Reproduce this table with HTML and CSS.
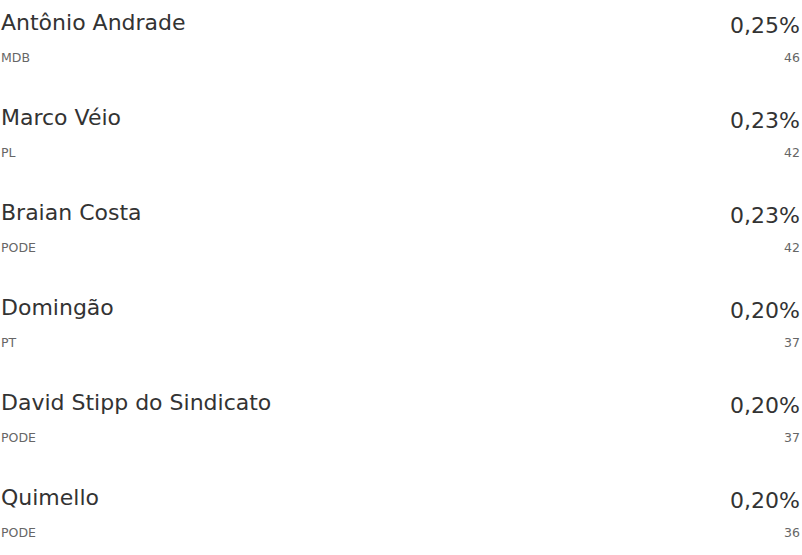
FILE: index.html
```
<!DOCTYPE html>
<html lang="pt-BR">
<head>
<meta charset="utf-8">
<link rel="stylesheet" href="styles.css">
</head>
<body>
<ul class="list">
  <li class="row">
    <div class="left"><div class="name">Antônio Andrade</div><div class="party">MDB</div></div>
    <div class="right"><div class="pct">0,25%</div><div class="votes">46</div></div>
  </li>
  <li class="row">
    <div class="left"><div class="name">Marco Véio</div><div class="party">PL</div></div>
    <div class="right"><div class="pct">0,23%</div><div class="votes">42</div></div>
  </li>
  <li class="row">
    <div class="left"><div class="name">Braian Costa</div><div class="party">PODE</div></div>
    <div class="right"><div class="pct">0,23%</div><div class="votes">42</div></div>
  </li>
  <li class="row">
    <div class="left"><div class="name">Domingão</div><div class="party">PT</div></div>
    <div class="right"><div class="pct">0,20%</div><div class="votes">37</div></div>
  </li>
  <li class="row">
    <div class="left"><div class="name">David Stipp do Sindicato</div><div class="party">PODE</div></div>
    <div class="right"><div class="pct">0,20%</div><div class="votes">37</div></div>
  </li>
  <li class="row">
    <div class="left"><div class="name">Quimello</div><div class="party">PODE</div></div>
    <div class="right"><div class="pct">0,20%</div><div class="votes">36</div></div>
  </li>
</ul>
</body>
</html>
```
FILE: styles.css
```
* { box-sizing: border-box; }
html, body { margin: 0; padding: 0; background: #fff; }
body { font-family: "DejaVu Sans", "Open Sans", sans-serif; color: #333; }
.list { list-style: none; margin: 0; padding: 0 2px 0 1px; }
.row { display: flex; justify-content: space-between; height: 95px; }
.left, .right { display: flex; flex-direction: column; }
.right { align-items: flex-end; }
.name { font-size: 22px; line-height: 30px; margin-top: 8px; color: #333; }
.party { font-size: 12.5px; line-height: 16px; margin-top: 12px; color: #666; }
.pct { font-size: 22px; line-height: 30px; margin-top: 11px; color: #333; }
.votes { font-size: 12.5px; line-height: 16px; margin-top: 9px; color: #666; }
```
